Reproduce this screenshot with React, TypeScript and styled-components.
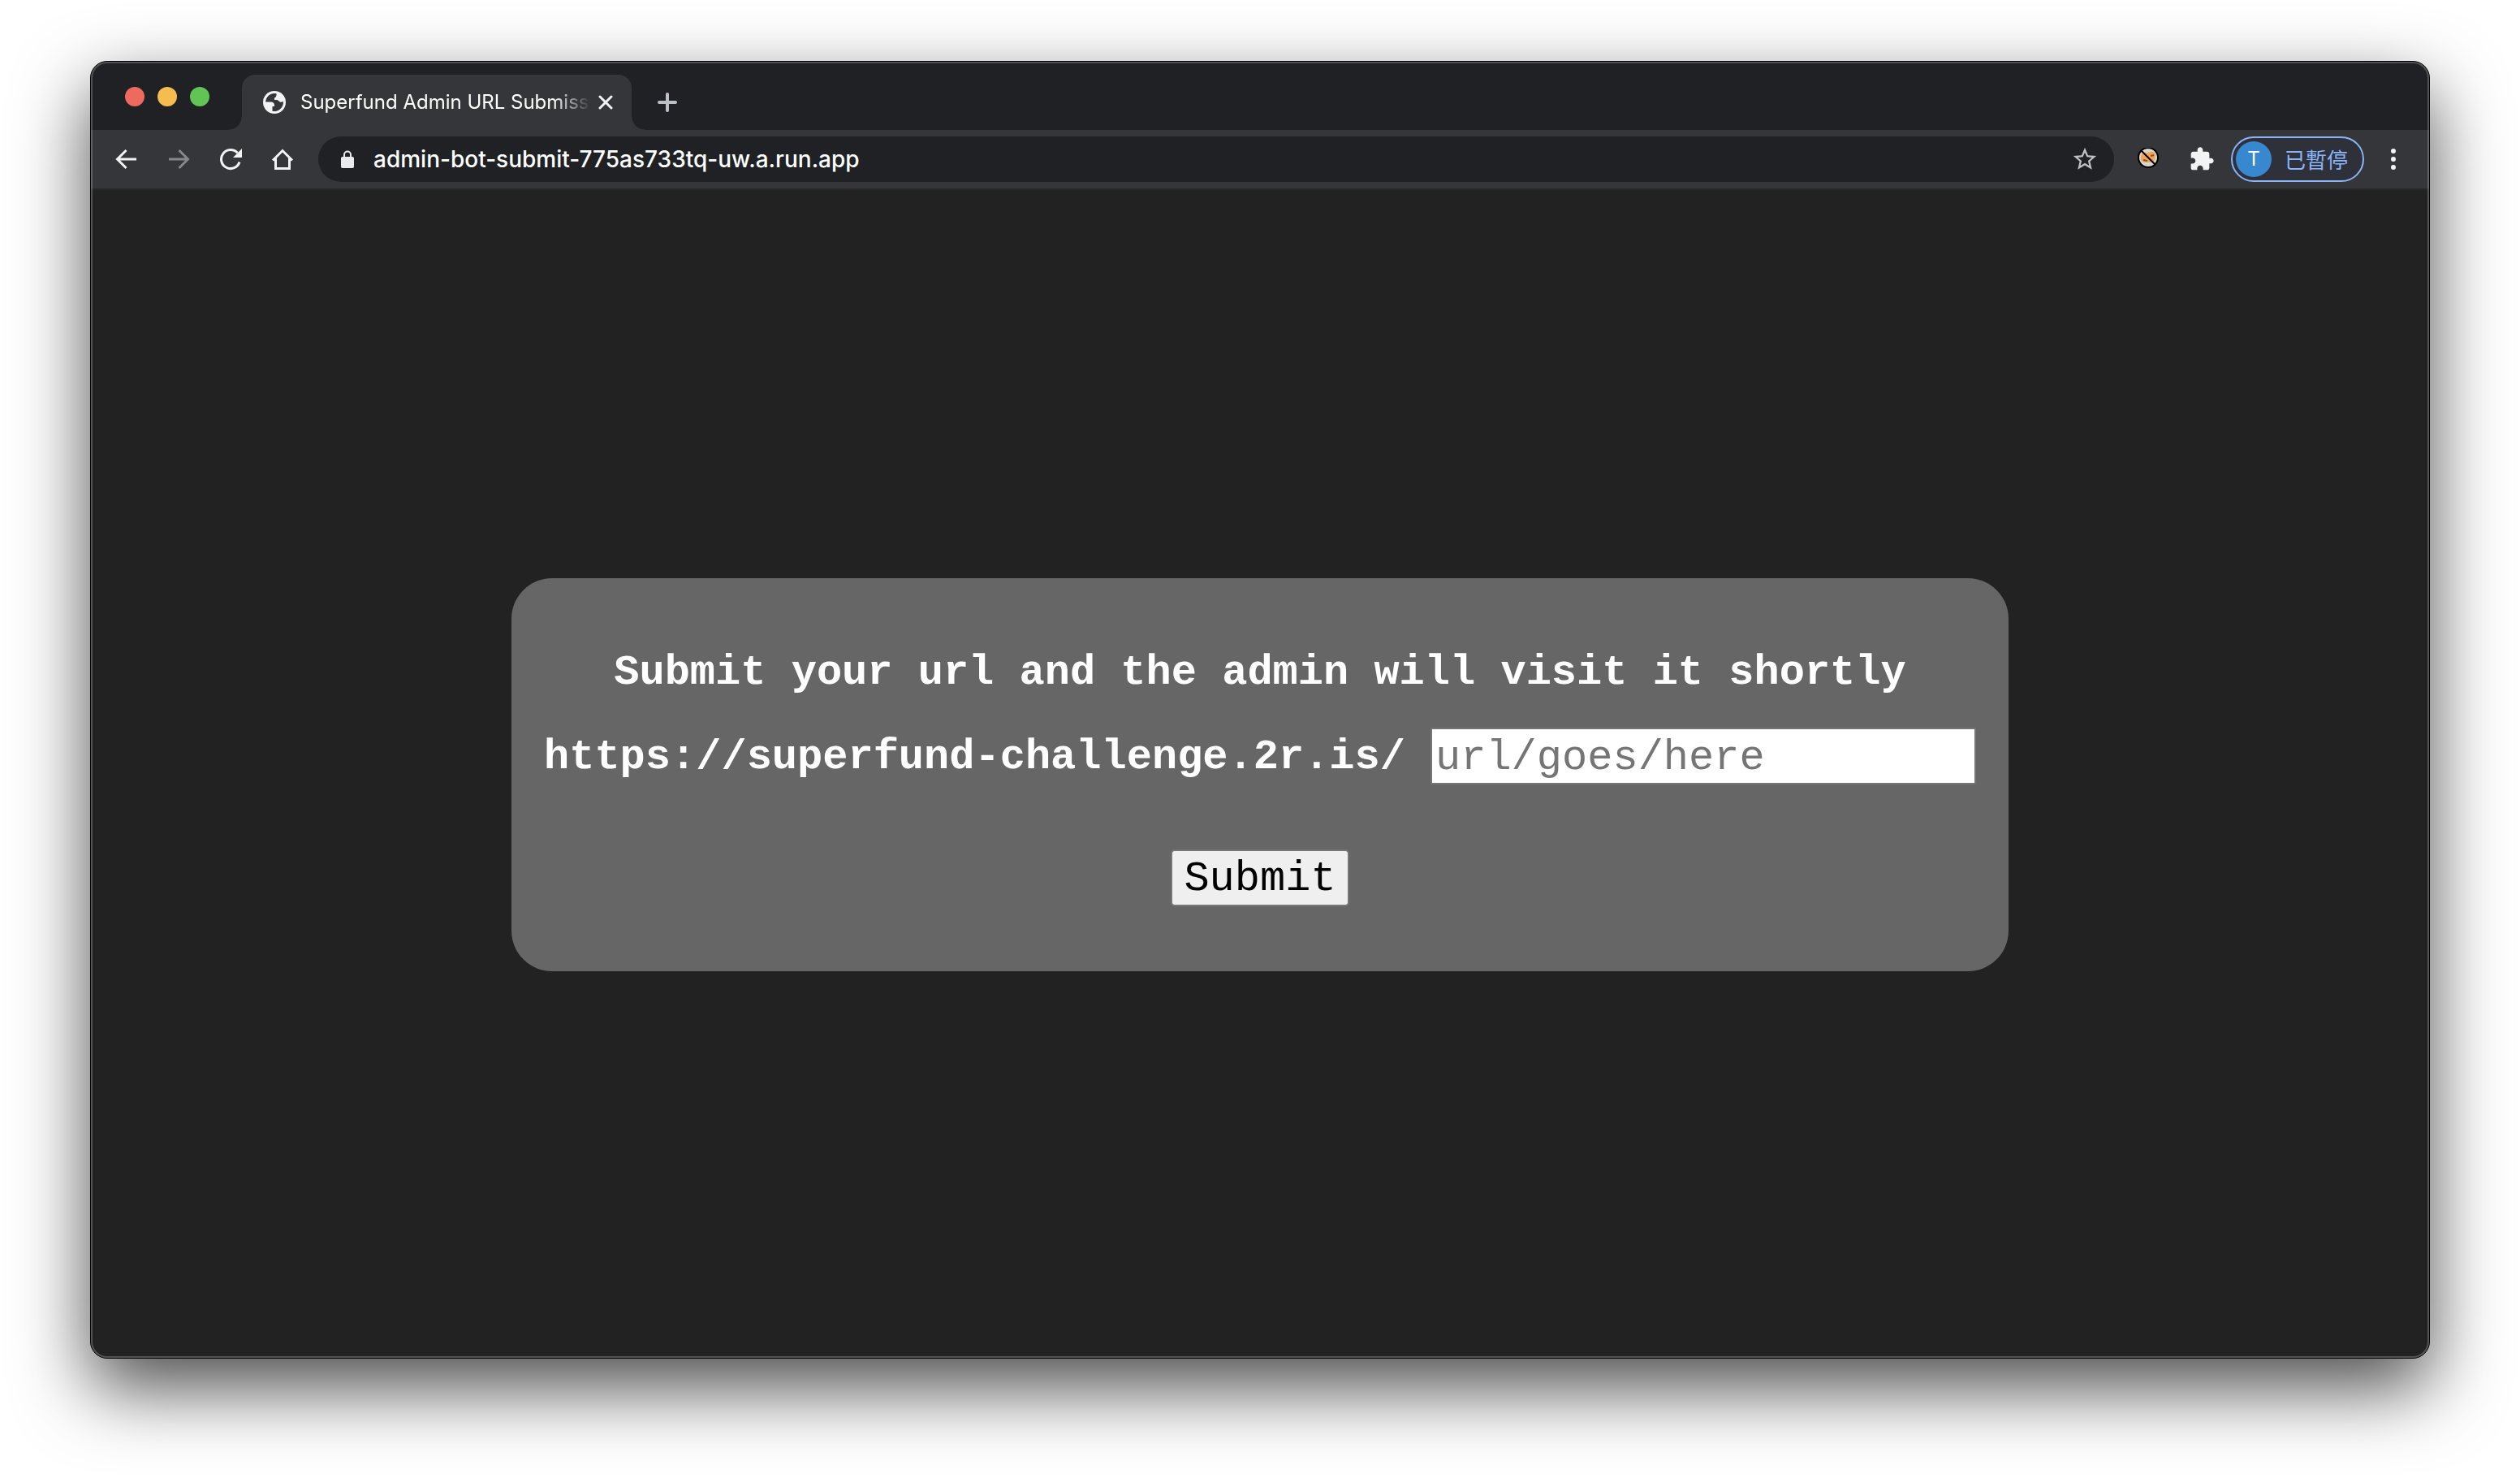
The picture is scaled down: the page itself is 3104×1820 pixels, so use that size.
import React from "react";
import styled, { createGlobalStyle } from "styled-components";

const colors = {
  strip: "#202124",
  toolbar: "#35363a",
  page: "#222222",
  card: "#666666",
  icon: "#f1f3f4",
  accent: "#8ab4f8",
};

const uiFont = `Inter, Roboto, "Noto Sans CJK TC", sans-serif`;
const monoFont = `"Courier New", "Liberation Mono", monospace`;

const GlobalStyle = createGlobalStyle`
  *, *::before, *::after { box-sizing: border-box; }
  body { margin: 0; background: #fff; }
`;

const Desktop = styled.div`
  min-height: 100vh;
  padding: 75px 111px 147px;
  display: flex;
  overflow: hidden;
`;

const BrowserWindow = styled.div`
  position: relative;
  flex: 1;
  min-width: 0;
  display: flex;
  flex-direction: column;
  border: 1px solid #000;
  border-radius: 21px;
  background: ${colors.page};
  box-shadow: 0 36px 90px rgba(0, 0, 0, 0.7);
  font-family: ${uiFont};

  &::after {
    content: "";
    position: absolute;
    inset: 0;
    border-radius: 20px;
    box-shadow: inset 0 0 0 2px rgba(255, 255, 255, 0.22);
    pointer-events: none;
  }
`;

const TabStrip = styled.div`
  display: flex;
  align-items: flex-end;
  height: 84px;
  padding-left: 42px;
  background: ${colors.strip};
  border-radius: 20px 20px 0 0;
`;

const WindowControls = styled.div`
  display: flex;
  gap: 16px;
  width: 144px;
  padding-bottom: 29px;
`;

const Light = styled.button<{ $color: string }>`
  width: 24px;
  height: 24px;
  padding: 0;
  border: 0;
  border-radius: 50%;
  background: ${(p) => p.$color};
`;

const Tab = styled.div`
  position: relative;
  display: flex;
  align-items: center;
  width: 480px;
  height: 68px;
  padding: 0 20px 0 26px;
  border-radius: 16px 16px 0 0;
  background: ${colors.toolbar};

  &::before,
  &::after {
    content: "";
    position: absolute;
    bottom: 0;
    width: 16px;
    height: 16px;
  }
  &::before {
    left: -16px;
    background: radial-gradient(circle at 0 0, transparent 15px, ${colors.toolbar} 16px);
  }
  &::after {
    right: -16px;
    background: radial-gradient(circle at 100% 0, transparent 15px, ${colors.toolbar} 16px);
  }
`;

const TabTitle = styled.span`
  flex: 1;
  min-width: 0;
  margin: 0 6px 0 18px;
  white-space: nowrap;
  color: #fff;
  font-size: 24px;
  line-height: 32px;
  mask-image: linear-gradient(to right, #000 calc(100% - 48px), transparent);
`;

const IconButton = styled.button<{ $size: number }>`
  flex: none;
  display: flex;
  align-items: center;
  justify-content: center;
  width: ${(p) => p.$size}px;
  height: ${(p) => p.$size}px;
  padding: 0;
  border: 0;
  background: none;
  color: ${colors.icon};
`;

const NewTabSlot = styled.div`
  display: flex;
  align-items: center;
  height: 68px;
  padding-left: 28px;
`;

const Toolbar = styled.div`
  display: flex;
  align-items: center;
  height: 72px;
  padding: 0 24px;
  background: ${colors.toolbar};
`;

const NavGroup = styled.div`
  display: flex;
  gap: 24px;
  margin-right: 24px;
`;

const AddressBar = styled.div`
  flex: 1;
  min-width: 0;
  display: flex;
  align-items: center;
  height: 56px;
  padding: 0 16px 0 26px;
  border-radius: 28px;
  background: ${colors.strip};
`;

const AddressInput = styled.input`
  flex: 1;
  min-width: 0;
  margin-left: 22px;
  padding: 0;
  border: 0;
  outline: 0;
  background: none;
  color: #fff;
  font-family: ${uiFont};
  font-size: 28px;
  font-weight: 500;
  line-height: 40px;
`;

const Extensions = styled.div`
  display: flex;
  gap: 26px;
  margin: 0 16px 0 22px;
`;

const ProfileButton = styled.button`
  flex: none;
  display: flex;
  align-items: center;
  width: 164px;
  height: 56px;
  padding: 0 0 0 4px;
  border: 2px solid ${colors.accent};
  border-radius: 28px;
  background: #2e303a;
  color: ${colors.accent};
  font-family: "Noto Sans CJK TC", sans-serif;
  font-size: 26px;
  line-height: 40px;
`;

const Avatar = styled.span`
  width: 44px;
  height: 44px;
  margin-right: 16px;
  border-radius: 50%;
  background: #3788ce;
  color: #fff;
  font-family: ${uiFont};
  font-size: 24px;
  line-height: 44px;
  text-align: center;
`;

const MenuSlot = styled.div`
  margin-left: 16px;
`;

const Page = styled.main`
  flex: 1;
  display: flex;
  align-items: center;
  justify-content: center;
  padding-top: 2px;
  border-top: 2px solid #282828;
  border-radius: 0 0 20px 20px;
  background: ${colors.page};
`;

const Card = styled.form`
  display: flex;
  flex-direction: column;
  align-items: center;
  padding: 80px 40px;
  border-radius: 50px;
  background: ${colors.card};
  color: #fff;
  font-family: ${monoFont};
  font-size: 52px;
  font-weight: 700;
  line-height: 66px;
`;

const Heading = styled.h1`
  margin: 0 0 34px;
  padding-top: 4px;
  font-size: inherit;
  line-height: inherit;
`;

const UrlRow = styled.div`
  display: flex;
  gap: 31px;
  margin-bottom: 80px;
`;

const UrlLabel = styled.label`
  padding-top: 4px;
`;

const UrlInput = styled.input`
  width: 672px;
  height: 70px;
  padding: 4px 4px 0;
  border: 2px solid #767676;
  border-radius: 2px;
  outline: 0;
  background: #fff;
  color: #000;
  font-family: ${monoFont};
  font-size: 52px;

  &::placeholder {
    color: #757575;
    opacity: 1;
  }
`;

const SubmitButton = styled.button`
  height: 70px;
  padding: 4px 14px 0;
  border: 2px solid #767676;
  border-radius: 5px;
  background: #efefef;
  color: #000;
  font-family: ${monoFont};
  font-size: 52px;
  line-height: 62px;
`;

const stroke = { fill: "none", stroke: "currentColor" };

const GlobeIcon = () => (
  <svg width="28" height="28" viewBox="0 0 28 28" aria-hidden="true">
    <circle cx="14" cy="14" r="14" fill="#f1f3f4" />
    <path
      fill="#35363a"
      d="M16.500 3.200A11 11 0 0 0 3.100 13.500h6.400c2.500 0 4.500 1.500 4.500 4v1.500h-2.500v5.700A11 11 0 0 0 24.900 12.800c-1.500 1-3.500 1.200-4.900.2-1-.8-1.500-2-3-2h-3V8.500c2-.3 2.800-2.500 2.500-5.300z"
    />
  </svg>
);

const ArrowIcon = ({ forward = false }: { forward?: boolean }) => (
  <svg width="28" height="28" viewBox="0 0 28 28" aria-hidden="true" {...stroke}>
    <path
      d={forward ? "M2 14h23M14.500 3l11 11-11 11" : "M26 14H3M13.500 3l-11 11 11 11"}
      stroke={forward ? "#868789" : colors.icon}
      strokeWidth="3"
    />
  </svg>
);

const ReloadIcon = () => (
  <svg width="28" height="28" viewBox="0 0 28 28" aria-hidden="true" {...stroke}>
    <path d="M25 17.500A11.500 11.500 0 1 1 22.500 6.300" strokeWidth="3" />
    <path d="M28 1v11H17z" fill="currentColor" stroke="none" />
  </svg>
);

const HomeIcon = () => (
  <svg width="28" height="28" viewBox="0 0 28 28" aria-hidden="true" {...stroke}>
    <path d="M2 15.500L14 3.500l12 12M5.500 13v12.500h17V13" strokeWidth="3" />
  </svg>
);

const LockIcon = () => (
  <svg width="20" height="24" viewBox="0 0 20 24" aria-hidden="true">
    <rect x="2" y="9" width="16" height="14" rx="2" fill="#e8eaed" />
    <path d="M6 10V6.500a4 4 0 0 1 8 0V10" fill="none" stroke="#e8eaed" strokeWidth="2" />
  </svg>
);

const StarIcon = () => (
  <svg width="34" height="34" viewBox="0 0 24 24" fill="#bfc1c4" aria-hidden="true">
    <path d="M22 9.240l-7.190-.62L12 2 9.190 8.630 2 9.240l5.460 4.730L5.820 21 12 17.270 18.180 21l-1.630-7.030L22 9.240zM12 15.400l-3.760 2.270 1-4.280-3.320-2.880 4.380-.38L12 6.100l1.710 4.040 4.380.38-3.320 2.880 1 4.280L12 15.400z" />
  </svg>
);

const BlockedFaceIcon = () => (
  <svg width="28" height="28" viewBox="0 0 28 28" aria-hidden="true">
    <circle cx="14" cy="12" r="12" fill="#d9d6d0" stroke="#000" strokeWidth="2" />
    <path
      fill="#f0a55a"
      d="M5 10c1-3 4-5 7-4l5-1c4-1 6 2 6 4l-1 6c-1 3-4 3-6 3l-7 0c-3-1-4-3-4-5z"
    />
    <path d="M17 10l4-1M8 15l5 1" fill="none" stroke="#8a5526" strokeWidth="2" />
    <path d="M5 3l18 18" stroke="#000" strokeWidth="2" />
  </svg>
);

const PuzzleIcon = () => (
  <svg width="32" height="32" viewBox="0 0 24 24" fill="currentColor" aria-hidden="true">
    <path d="M20.500 11H19V7c0-1.100-.9-2-2-2h-4V3.500C13 2.120 11.880 1 10.500 1S8 2.120 8 3.500V5H4c-1.100 0-1.990.9-1.990 2v3.800H3.500c1.490 0 2.700 1.210 2.700 2.700s-1.210 2.700-2.700 2.700H2V20c0 1.100.9 2 2 2h3.800v-1.500c0-1.490 1.210-2.700 2.700-2.700 1.490 0 2.700 1.210 2.700 2.700V22H17c1.100 0 2-.9 2-2v-4h1.500c1.380 0 2.500-1.120 2.500-2.500S21.880 11 20.500 11z" />
  </svg>
);

const MenuIcon = () => (
  <svg width="8" height="28" viewBox="0 0 8 28" fill="currentColor" aria-hidden="true">
    <circle cx="4" cy="4" r="3" />
    <circle cx="4" cy="14" r="3" />
    <circle cx="4" cy="24" r="3" />
  </svg>
);

const CloseIcon = () => (
  <svg width="18" height="18" viewBox="0 0 18 18" aria-hidden="true" {...stroke}>
    <path d="M2 2l14 14M16 2L2 16" strokeWidth="3" strokeLinecap="round" />
  </svg>
);

const PlusIcon = () => (
  <svg width="24" height="24" viewBox="0 0 24 24" aria-hidden="true">
    <path d="M12 2v20M2 12h20" stroke="#bdc1c6" strokeWidth="4" strokeLinecap="round" />
  </svg>
);

export default function App() {
  return (
    <>
      <GlobalStyle />
      <Desktop>
        <BrowserWindow>
          <TabStrip>
            <WindowControls>
              <Light $color="#ed6a5e" aria-label="Close window" />
              <Light $color="#f5bd4f" aria-label="Minimize window" />
              <Light $color="#61c454" aria-label="Zoom window" />
            </WindowControls>
            <Tab>
              <GlobeIcon />
              <TabTitle>Superfund Admin URL Submiss</TabTitle>
              <IconButton $size={24} aria-label="Close tab">
                <CloseIcon />
              </IconButton>
            </Tab>
            <NewTabSlot>
              <IconButton $size={32} aria-label="New tab">
                <PlusIcon />
              </IconButton>
            </NewTabSlot>
          </TabStrip>
          <Toolbar>
            <NavGroup>
              <IconButton $size={40} aria-label="Back">
                <ArrowIcon />
              </IconButton>
              <IconButton $size={40} aria-label="Forward">
                <ArrowIcon forward />
              </IconButton>
              <IconButton $size={40} aria-label="Reload">
                <ReloadIcon />
              </IconButton>
              <IconButton $size={40} aria-label="Home">
                <HomeIcon />
              </IconButton>
            </NavGroup>
            <AddressBar>
              <LockIcon />
              <AddressInput
                aria-label="Address"
                defaultValue="admin-bot-submit-775as733tq-uw.a.run.app"
              />
              <IconButton $size={40} aria-label="Bookmark">
                <StarIcon />
              </IconButton>
            </AddressBar>
            <Extensions>
              <IconButton $size={40} aria-label="Blocker">
                <BlockedFaceIcon />
              </IconButton>
              <IconButton $size={40} aria-label="Extensions">
                <PuzzleIcon />
              </IconButton>
            </Extensions>
            <ProfileButton>
              <Avatar>T</Avatar>
              已暫停
            </ProfileButton>
            <MenuSlot>
              <IconButton $size={40} aria-label="Menu">
                <MenuIcon />
              </IconButton>
            </MenuSlot>
          </Toolbar>
          <Page>
            <Card onSubmit={(e) => e.preventDefault()}>
              <Heading>Submit your url and the admin will visit it shortly</Heading>
              <UrlRow>
                <UrlLabel htmlFor="url">https://superfund-challenge.2r.is/</UrlLabel>
                <UrlInput id="url" type="text" placeholder="url/goes/here" />
              </UrlRow>
              <SubmitButton type="submit">Submit</SubmitButton>
            </Card>
          </Page>
        </BrowserWindow>
      </Desktop>
    </>
  );
}
